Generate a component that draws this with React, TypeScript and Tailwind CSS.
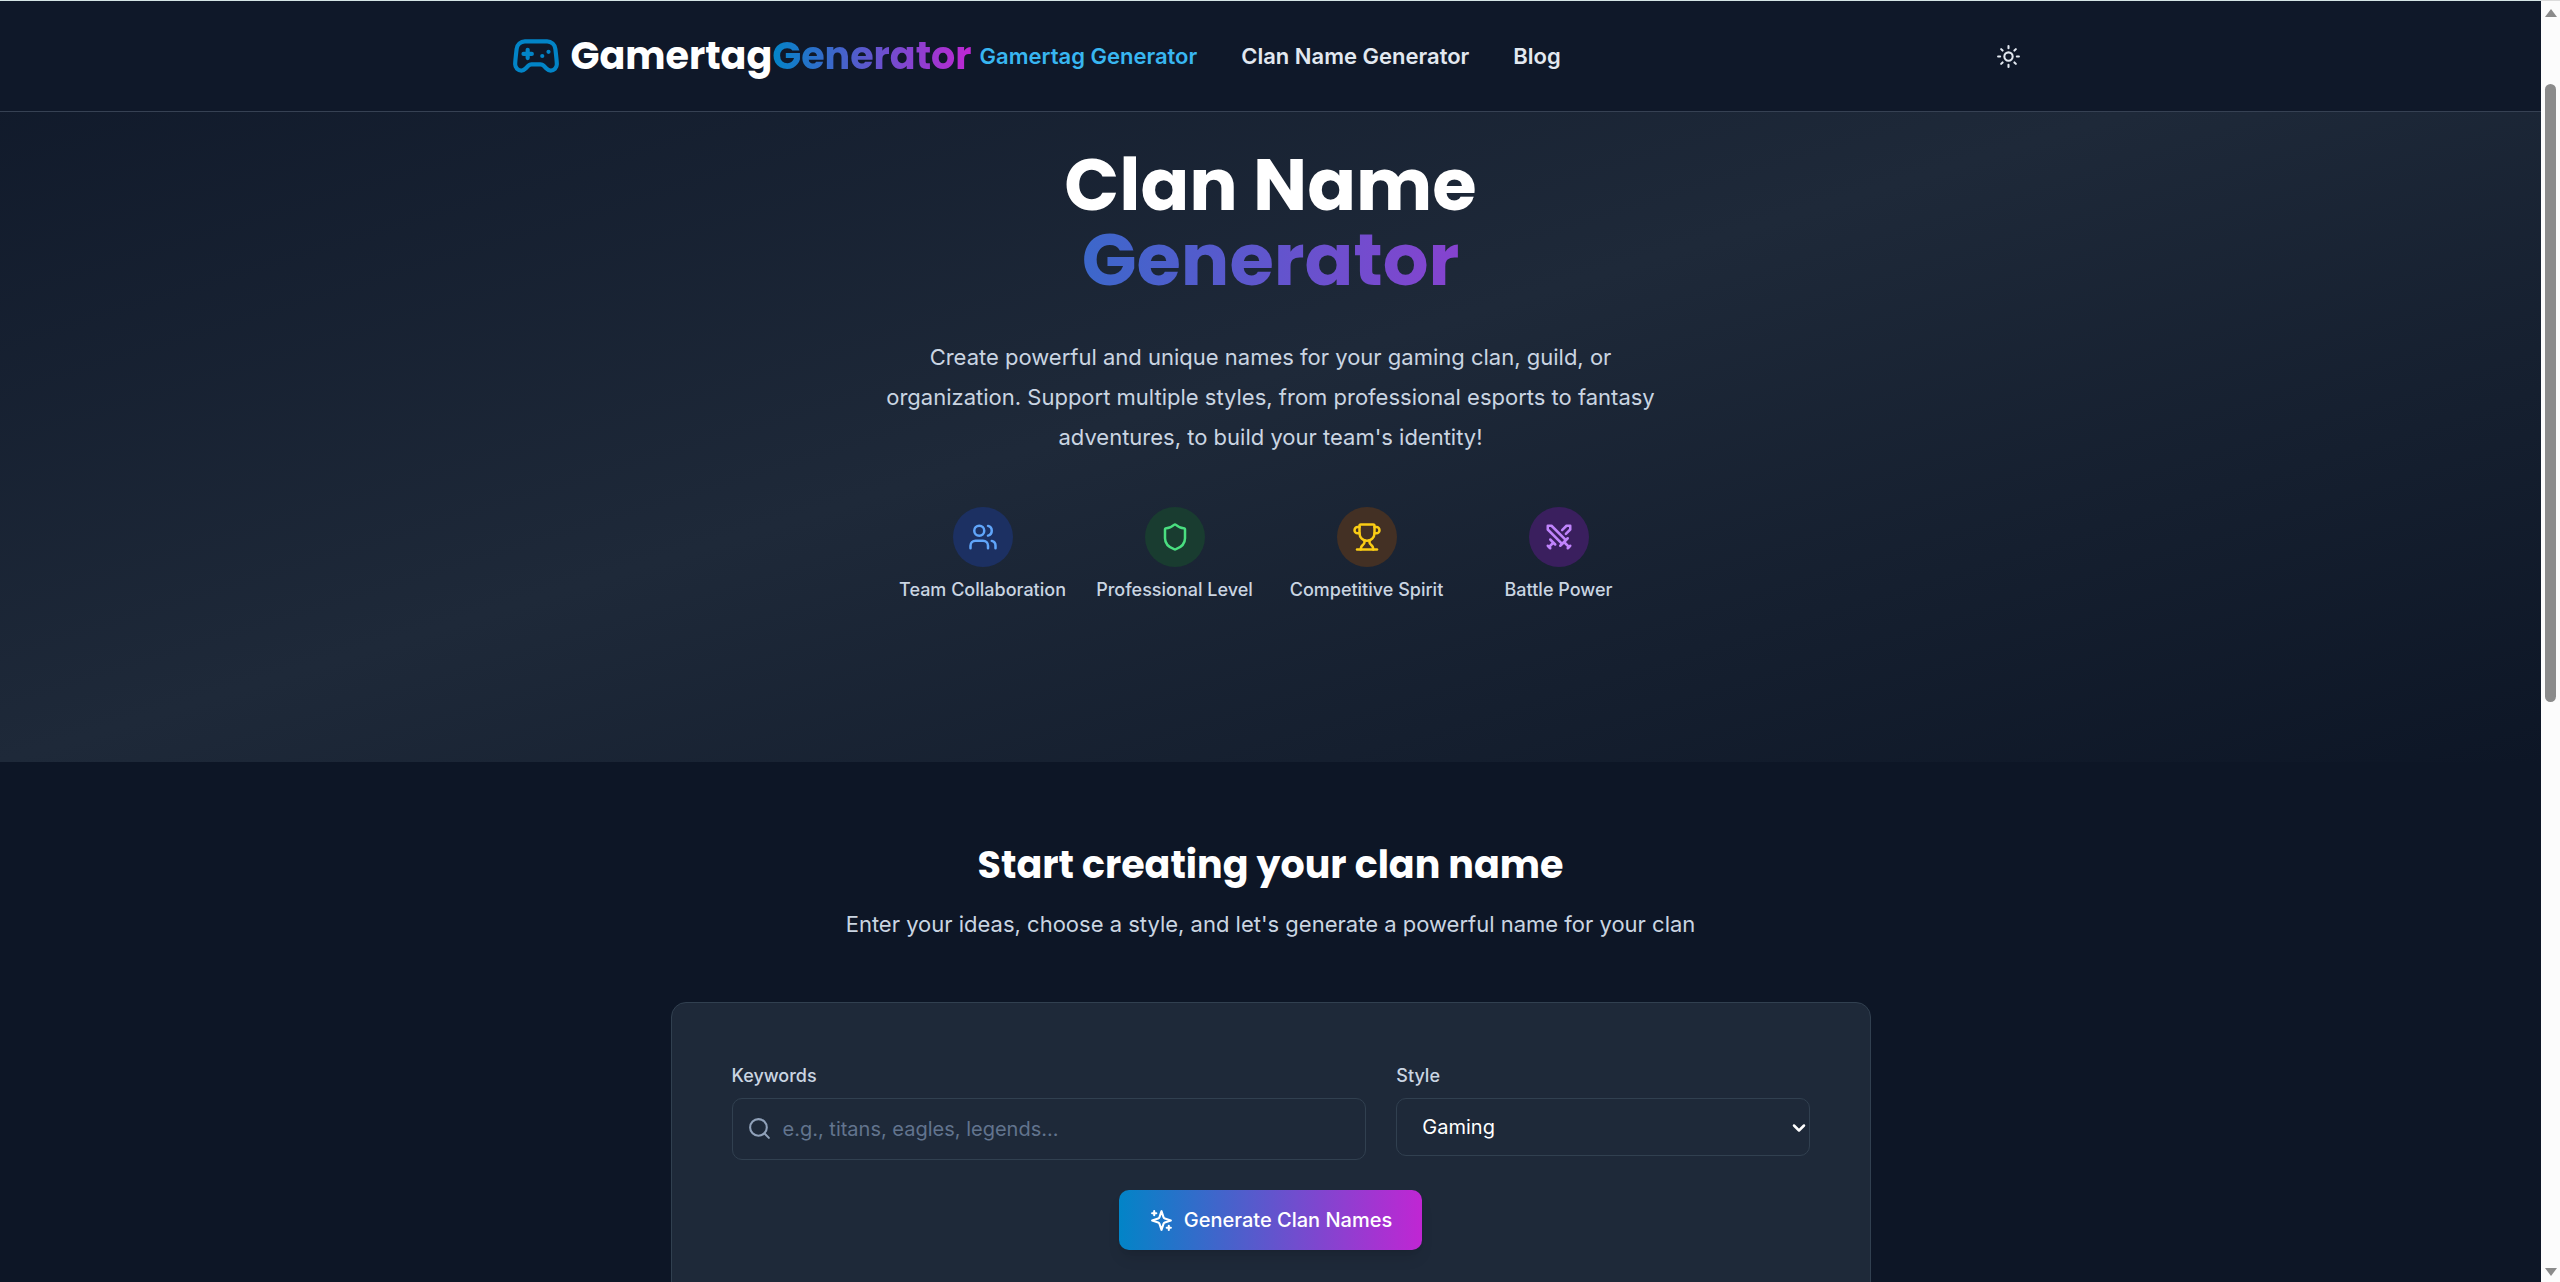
import { Gamepad2, Search, Shield, Sun, Swords, Trophy, Users, ChevronDown } from 'lucide-react';

const navLinks = [
  { label: 'Gamertag Generator', href: '#gamertag', active: true },
  { label: 'Clan Name Generator', href: '#clan', active: false },
  { label: 'Blog', href: '#blog', active: false },
];

const features = [
  { label: 'Team Collaboration', icon: Users, color: 'bg-[#1c3062] text-[#60a5fa]' },
  { label: 'Professional Level', icon: Shield, color: 'bg-[#193c30] text-[#4ade80]' },
  { label: 'Competitive Spirit', icon: Trophy, color: 'bg-[#433024] text-[#facc15]' },
  { label: 'Battle Power', icon: Swords, color: 'bg-[#3a1f5e] text-[#c084fc]' },
];

const heading = "font-['Poppins','Inter',sans-serif] font-bold text-white";
const brandGradient = 'bg-linear-to-r/srgb from-[#0284c7] to-[#c026d3]';

function Sparkles() {
  return (
    <svg
      viewBox="0 0 24 24"
      className="w-[25px] h-[25px]"
      fill="none"
      stroke="currentColor"
      strokeWidth="2"
      strokeLinecap="round"
      strokeLinejoin="round"
      aria-hidden="true"
    >
      <path d="m12 3-1.912 5.813a2 2 0 0 1-1.275 1.275L3 12l5.813 1.912a2 2 0 0 1 1.275 1.275L12 21l1.912-5.813a2 2 0 0 1 1.275-1.275L21 12l-5.813-1.912a2 2 0 0 1-1.275-1.275L12 3Z" />
      <path d="M5 3v4M19 17v4M3 5h4M17 19h4" />
    </svg>
  );
}

function Header() {
  return (
    <header className="relative z-10 border-t border-t-[#d5e5e5] border-b border-b-[#364153] bg-[#0f1829]">
      <div className="max-w-[1600px] mx-auto px-10 h-[110px] flex items-center">
        <div className="flex flex-1 items-center">
          <a href="#home" className="flex items-center gap-[10px]">
            <Gamepad2 className="w-[50px] h-[50px] text-[#0284c7]" />
            <span className={`${heading} text-[38px] leading-[50px]`}>
              Gamertag
              <span className={`${brandGradient} bg-clip-text text-transparent`}>Generator</span>
            </span>
          </a>
          <nav className="ml-2 flex items-center gap-11">
            {navLinks.map((link) => (
              <a
                key={link.label}
                href={link.href}
                className={`text-[22px] font-semibold ${link.active ? 'text-[#38b6f1]' : 'text-[#e2e8f0]'}`}
              >
                {link.label}
              </a>
            ))}
          </nav>
        </div>
        <button type="button" aria-label="Toggle theme" className="p-[10px] text-[#e2e8f0]">
          <Sun className="w-[25px] h-[25px]" />
        </button>
      </div>
    </header>
  );
}

function Hero() {
  return (
    <section className="-mt-[125px] pt-[160px] pb-[160px] bg-linear-to-br from-[#0f1829] via-[#1e2939] to-[#0d1626]">
      <div className="max-w-[960px] mx-auto text-center">
        <h1 className={`${heading} text-[72px] leading-[75px]`}>
          <span className="block">Clan Name</span>
          <span className={`block ${brandGradient} bg-clip-text text-transparent`}>Generator</span>
        </h1>
        <p className="mt-[40px] max-w-[800px] mx-auto text-[22px] leading-[40px] text-[#cad5e2]">
          Create powerful and unique names for your gaming clan, guild, or organization. Support multiple styles, from
          professional esports to fantasy adventures, to build your team's identity!
        </p>
        <div className="mt-[50px] max-w-[738px] mx-auto grid grid-cols-4 gap-[30px]">
          {features.map(({ label, icon: Icon, color }) => (
            <div key={label} className="flex flex-col items-center gap-[10px]">
              <div className={`w-[60px] h-[60px] rounded-full flex items-center justify-center ${color}`}>
                <Icon className="w-[30px] h-[30px]" />
              </div>
              <span className="whitespace-nowrap text-[18px] leading-[25px] font-medium text-[#cad5e2]">{label}</span>
            </div>
          ))}
        </div>
      </div>
    </section>
  );
}

function GeneratorForm() {
  return (
    <section className="py-[80px]">
      <div className="max-w-[1200px] mx-auto">
        <div className="text-center">
          <h2 className={`${heading} text-[38px] leading-[45px]`}>Start creating your clan name</h2>
          <p className="mt-[20px] text-[22px] leading-[35px] text-[#cad5e2]">
            Enter your ideas, choose a style, and let's generate a powerful name for your clan
          </p>
        </div>

        <form className="mt-[60px] p-[60px] rounded-[15px] border border-[#314050] bg-[#1e2939]">
          <div className="grid grid-cols-5 items-start gap-[30px]">
            <div className="col-span-3">
              <label htmlFor="keywords" className="block mb-[10px] text-[18px] leading-[25px] font-medium text-[#cad5e2]">
                Keywords
              </label>
              <div className="relative">
                <Search className="absolute left-[15px] top-[18px] w-[25px] h-[25px] text-[#90a1b9]" />
                <input
                  id="keywords"
                  type="text"
                  placeholder="e.g., titans, eagles, legends..."
                  className="w-full h-[62px] pl-[50px] pr-5 rounded-[10px] border border-[#314050] bg-transparent text-[20px] text-white placeholder:text-[#62748e]"
                />
              </div>
            </div>
            <div className="col-span-2">
              <label htmlFor="style" className="block mb-[10px] text-[18px] leading-[25px] font-medium text-[#cad5e2]">
                Style
              </label>
              <div className="relative">
                <select
                  id="style"
                  className="w-full h-[58px] px-[25px] appearance-none rounded-[10px] border border-[#314050] bg-[#1e2939] text-[20px] text-white"
                >
                  <option>Gaming</option>
                  <option>Fantasy</option>
                  <option>Professional</option>
                </select>
                <ChevronDown
                  strokeWidth={3}
                  className="pointer-events-none absolute right-px top-[20px] w-[20px] h-[20px] text-white"
                />
              </div>
            </div>
          </div>
          <div className="mt-[30px] flex justify-center">
            <button
              type="button"
              className={`h-[60px] px-[30px] flex items-center gap-[10px] rounded-[10px] ${brandGradient} text-[20px] font-medium text-white shadow-lg`}
            >
              <Sparkles />
              Generate Clan Names
            </button>
          </div>
        </form>
      </div>
    </section>
  );
}

function ScrollTrack() {
  return (
    <div className="w-[19px] shrink-0 flex flex-col items-center bg-[#fcfcfc] border-t border-[#dcdcdc]" aria-hidden="true">
      <svg viewBox="0 0 12 8" className="mt-[8px] w-3 h-2 fill-[#8b8b8b]">
        <path d="M6 0 12 8H0Z" />
      </svg>
      <div className="mt-[67px] w-[11px] h-[618px] rounded-full bg-[#8b8b8b]" />
      <svg viewBox="0 0 12 8" className="mt-auto mb-[6px] w-3 h-2 fill-[#8b8b8b]">
        <path d="M0 0H12L6 8Z" />
      </svg>
    </div>
  );
}

export default function App() {
  return (
    <div className="flex h-screen overflow-hidden bg-[#0d1626] font-['Inter',sans-serif]">
      <main className="flex-1 overflow-hidden">
        <Header />
        <Hero />
        <GeneratorForm />
      </main>
      <ScrollTrack />
    </div>
  );
}
